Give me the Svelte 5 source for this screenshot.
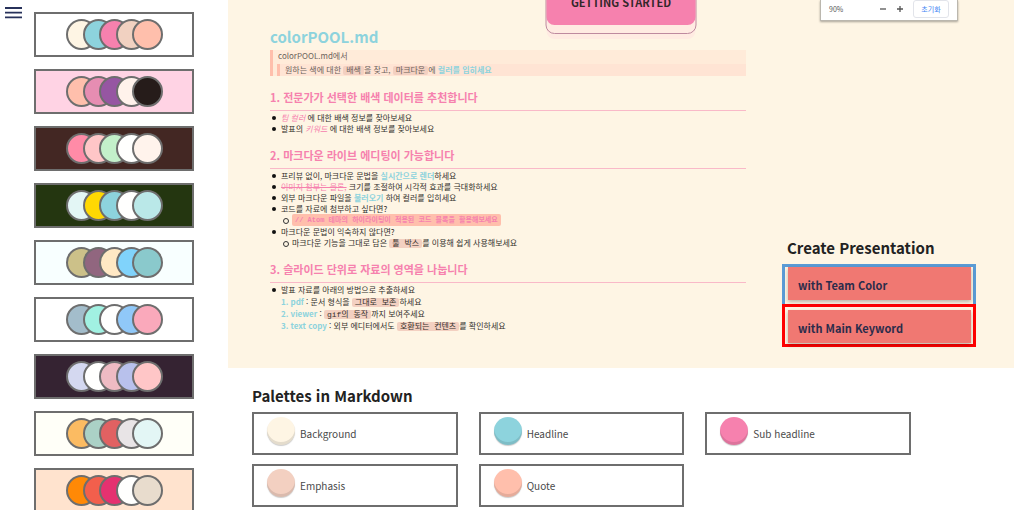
<script>
  const themes = [
    { bg: '#ffffff', colors: ['#fef5e4', '#8dd3dd', '#f681ae', '#f1d1c1', '#ffbfac'] },
    { bg: '#ffd3e4', colors: ['#ffbfac', '#e68db2', '#9656a2', '#fff2eb', '#261c1a'] },
    { bg: '#432723', colors: ['#ff8ba7', '#ffc6c7', '#c3f0ca', '#fffffe', '#fff3ec'] },
    { bg: '#243610', colors: ['#e3f6f5', '#ffd803', '#8dd3dd', '#fffffe', '#bae8e8'] },
    { bg: '#f8ffff', colors: ['#ccc189', '#91667f', '#ffe8c4', '#80d3fb', '#8ac9cc'] },
    { bg: '#ffffff', colors: ['#a3bdcb', '#a1f1e2', '#fffffe', '#90c8f8', '#faa9bb'] },
    { bg: '#352332', colors: ['#d4d8f0', '#fffffe', '#eebbc3', '#b8c1ec', '#ffc6c7'] },
    { bg: '#fffff8', colors: ['#fbbb62', '#abd1c6', '#e16162', '#e8e4e6', '#e3f6f5'] },
    { bg: '#ffe3ce', colors: ['#ff8906', '#f25f4c', '#e53170', '#fffffe', '#e8dccd'] }
  ];

  const palettes = [
    { name: 'Background', color: '#fef5e4' },
    { name: 'Headline', color: '#8dd3dd' },
    { name: 'Sub headline', color: '#f681ae' },
    { name: 'Emphasis', color: '#f3d0c1' },
    { name: 'Quote', color: '#ffbfac' }
  ];
</script>

<div class="page" lang="ko">
  <aside>
    <button class="menu" aria-label="Menu">
      <svg width="17" height="12" viewBox="0 0 17 12" aria-hidden="true">
        <path d="M0 1h17M0 5.7h17M0 10.3h17" stroke="#27315a" stroke-width="1.8" />
      </svg>
    </button>
    <div class="themes">
      {#each themes as theme, i}
        <button class="theme" style="background: {theme.bg}" aria-label="Theme {i + 1}">
          <span class="swatches">
            {#each theme.colors as color}
              <span class="swatch" style="background: {color}"></span>
            {/each}
          </span>
        </button>
      {/each}
    </div>
  </aside>

  <main>
    <section class="hero">
      <button class="start"><span>GETTING STARTED</span></button>
      <div class="zoom">
        <span class="percent">90%</span>
        <button class="step" aria-label="Zoom out">
          <svg width="8" height="8" viewBox="0 0 8 8"><path d="M1 4h6" stroke="#555" stroke-width="1.3" /></svg>
        </button>
        <button class="step" aria-label="Zoom in">
          <svg width="8" height="8" viewBox="0 0 8 8"><path d="M1 4h6M4 1v6" stroke="#555" stroke-width="1.3" /></svg>
        </button>
        <button class="reset">초기화</button>
      </div>

      <article>
        <h1>colorPOOL.md</h1>
        <blockquote>
          <p>colorPOOL.md에서</p>
          <blockquote>
            <p>원하는 색에 대한 <code>배색</code>을 찾고, <code>마크다운</code>에 <strong>컬러를 입히세요</strong></p>
          </blockquote>
        </blockquote>

        <h2>1. 전문가가 선택한 배색 데이터를 추천합니다</h2>
        <ul>
          <li><em>팀 컬러</em> 에 대한 배색 정보를 찾아보세요</li>
          <li>발표의 <em>키워드</em> 에 대한 배색 정보를 찾아보세요</li>
        </ul>

        <h2>2. 마크다운 라이브 에디팅이 가능합니다</h2>
        <ul>
          <li>프리뷰 없이, 마크다운 문법을 <strong>실시간으로 렌더</strong>하세요</li>
          <li><del>이미지 첨부는 물론,</del> 크기를 조절하여 시각적 효과를 극대화하세요</li>
          <li>외부 마크다운 파일을 <strong>불러오기</strong> 하여 컬러를 입히세요</li>
          <li>코드를 자료에 첨부하고 싶다면?
            <ul><li><code class="comment">// Atom 테마의 하이라이팅이 적용된 코드 블록을 활용해보세요</code></li></ul>
          </li>
          <li>마크다운 문법이 익숙하지 않다면?
            <ul><li>마크다운 기능을 그대로 담은 <code>툴 박스</code>를 이용해 쉽게 사용해보세요</li></ul>
          </li>
        </ul>

        <h2>3. 슬라이드 단위로 자료의 영역을 나눕니다</h2>
        <ul>
          <li>발표 자료를 아래의 방법으로 추출하세요
            <div class="ways">
              <p><strong>1. pdf</strong> : 문서 형식을 <code>그대로 보존</code>하세요</p>
              <p><strong>2. viewer</strong> : <code>gif의 동작</code>까지 보여주세요</p>
              <p><strong>3. text copy</strong> : 외부 에디터에서도 <code>호환되는 컨텐츠</code>를 확인하세요</p>
            </div>
          </li>
        </ul>
      </article>

      <div class="create">
        <h3>Create Presentation</h3>
        <div class="frame team"><button>with Team Color</button></div>
        <div class="frame keyword"><button>with Main Keyword</button></div>
      </div>
    </section>

    <section class="palettes">
      <h3>Palettes in Markdown</h3>
      <div class="cards">
        {#each palettes as palette}
          <button class="card">
            <span class="dot" style="background: {palette.color}"></span>
            <span class="name">{palette.name}</span>
          </button>
        {/each}
      </div>
    </section>
  </main>
</div>

<style>
  :global(body) {
    margin: 0;
    background: #fff;
  }
  .page {
    display: grid;
    grid-template-columns: 228px minmax(0, 1fr);
    height: 100vh;
    overflow: hidden;
    font-family: 'Noto Sans CJK KR', 'Noto Sans', sans-serif;
    color: #222;
  }
  .page * {
    box-sizing: border-box;
  }
  button {
    font: inherit;
    color: inherit;
    border: 0;
    padding: 0;
    background: none;
    cursor: pointer;
  }
  h1, h2, h3, p, ul, blockquote {
    margin: 0;
    padding: 0;
  }
  aside {
    display: flex;
    align-items: flex-start;
    padding: 7px 34px 0 5px;
  }
  .menu {
    display: flex;
    width: 29px;
    flex: none;
  }
  .themes {
    display: flex;
    flex: 1;
    flex-direction: column;
    gap: 12px;
    padding-top: 5px;
  }
  .theme {
    display: flex;
    align-items: center;
    height: 45px;
    padding-left: 30px;
    border: 2px solid #6e6e6e;
  }
  .swatches {
    display: grid;
    grid-template-columns: repeat(5, minmax(0, 1fr));
    width: 83px;
  }
  .swatch {
    width: 31px;
    height: 31px;
    border: 2px solid #6e6e6e;
    border-radius: 50%;
  }
  .hero {
    position: relative;
    display: grid;
    grid-template-columns: minmax(0, 1fr) 194px;
    gap: 36px;
    padding: 28px 38px 21px 42px;
    background: #fef5e4;
  }
  .start {
    position: absolute;
    top: -24px;
    left: 50%;
    width: 151px;
    height: 58px;
    transform: translateX(-50%);
    padding-bottom: 8px;
    border: 1px solid #be8a9f;
    border-radius: 9px;
    background: #ffebe2;
    box-shadow: 0 6px 0 -1px #ffebe2;
  }
  .start span {
    display: flex;
    align-items: center;
    justify-content: center;
    height: 100%;
    padding-top: 2px;
    border-radius: 0 0 8px 8px;
    background: #f681ae;
    color: #33272a;
    font-size: 11px;
    line-height: 12px;
    font-weight: 700;
  }
  .zoom {
    position: absolute;
    top: 0;
    right: 56px;
    display: flex;
    align-items: center;
    width: 138px;
    height: 21px;
    padding: 0 8px;
    border: 1px solid #bbb7ae;
    border-top: 0;
    background: #fff;
    box-shadow: 0 1px 2px #0005;
    font-size: 7px;
    line-height: 16px;
    color: #555;
  }
  .percent {
    flex: 1;
    padding-bottom: 3px;
  }
  .step {
    display: flex;
    margin: 0 9px 3px 0;
  }
  .reset {
    width: 36px;
    height: 18px;
    margin-bottom: 3px;
    border: 1px solid #e2e4ea;
    border-radius: 3px;
    color: #4285f4;
  }
  article {
    padding-bottom: 15px;
    font-size: 8px;
    line-height: 11px;
    color: #33302c;
  }
  h1 {
    margin-bottom: 4px;
    color: #8dd3dd;
    font-size: 15px;
    line-height: 18px;
  }
  blockquote {
    border-left: 3px solid #ffbfac;
    background: #ffebd9;
    color: #6b625b;
  }
  blockquote p {
    padding-left: 5px;
    line-height: 12px;
  }
  blockquote blockquote {
    margin: 2px 0 0 4px;
    background: #ffe4d4;
  }
  h2 {
    margin: 12px 0 1px;
    padding-bottom: 4px;
    border-bottom: 1px solid #f9b9c8;
    color: #f681ae;
    font-size: 11px;
    line-height: 18px;
  }
  ul {
    padding-left: 11px;
    list-style: none;
  }
  li {
    position: relative;
  }
  li::before {
    content: '';
    position: absolute;
    top: 4px;
    left: -9px;
    width: 4px;
    height: 4px;
    border-radius: 50%;
    background: #111;
  }
  li li::before {
    border: 1px solid #333;
    background: none;
  }
  strong {
    color: #8dd3dd;
  }
  em, del {
    color: #f681ae;
  }
  code {
    padding: 0 3px;
    border-radius: 2px;
    background: #f3d0c1;
    font-family: 'Liberation Mono', 'Noto Sans CJK KR', monospace;
    font-size: 8px;
    line-height: 8px;
  }
  .comment {
    display: block;
    width: fit-content;
    line-height: 12px;
    background: #ffbfac;
    color: #f681ae;
    font-size: 7px;
    font-weight: 700;
  }
  .ways {
    padding-top: 1px;
    line-height: 12px;
  }
  .create {
    align-self: end;
  }
  h3 {
    font-size: 15px;
    font-weight: 700;
    line-height: 24px;
  }
  .create h3 {
    padding: 0 0 4px 5px;
  }
  .frame {
    display: flex;
    border: 3px solid #5b9bd5;
  }
  .frame button {
    flex: 1;
    height: 33px;
    padding: 2px 0 0 10px;
    background: #f07872;
    box-shadow: 0 2px 4px #0004;
    color: #2b2c4b;
    font-size: 11px;
    font-weight: 700;
    text-align: left;
  }
  .team {
    padding: 0 2px 4px 3px;
    border-bottom: 0;
  }
  .keyword {
    padding: 3px 2px 1px 3px;
    border-color: #f00;
  }
  .palettes {
    padding: 16px 103px 0 24px;
  }
  .cards {
    display: grid;
    grid-template-columns: repeat(3, minmax(0, 1fr));
    gap: 9px 21px;
    padding-top: 4px;
  }
  .card {
    display: flex;
    align-items: center;
    gap: 5px;
    height: 43px;
    padding: 0 13px;
    border: 2px solid #6e6e6e;
    text-align: left;
  }
  .dot {
    width: 28px;
    height: 28px;
    margin-bottom: 6px;
    border-radius: 50%;
    box-shadow: inset 0 -3px 0 #0000001a, 0 1px 1px #0003;
  }
  .name {
    color: #4a4a4a;
    font-size: 10px;
    line-height: 16px;
  }
</style>
